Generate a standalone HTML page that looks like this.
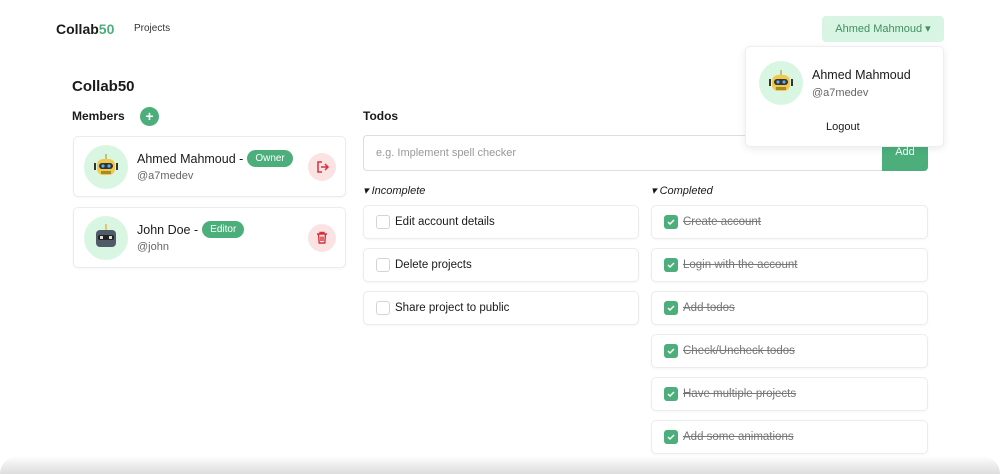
<!DOCTYPE html>
<html><head><meta charset="utf-8"><style>
*{box-sizing:border-box;margin:0;padding:0}
body{width:1000px;height:474px;overflow:hidden;background:#fff;font-family:"Liberation Sans",sans-serif;color:#1a1a1a;position:relative}
.a{position:absolute}
.card{position:absolute;border:1px solid #ececec;border-radius:5px;background:#fff;box-shadow:0 1px 2px rgba(0,0,0,.04)}
.todo{height:34px;font-size:11.5px;display:flex;align-items:center;padding-left:12px}
.cb{width:14px;height:14px;border:1px solid #d4d4d4;border-radius:3px;margin-right:5px;background:#fff}
.ck{width:14px;height:14px;border-radius:3px;margin-right:5px;background:#4caf7b;display:flex;align-items:center;justify-content:center}
.done{color:#777;text-decoration:line-through}
.badge{background:#4caf7b;color:#fff;font-size:10px;border-radius:9px;padding:3px 8px;margin-left:4px}
.av{position:absolute;width:44px;height:44px;border-radius:50%;background:#d9f6e3}
</style></head><body>
<div class="a" style="left:56px;top:21px;font-size:14px;font-weight:bold">Collab<span style="color:#4caf7b">50</span></div>
<div class="a" style="left:134px;top:23px;font-size:10px;color:#333">Projects</div>
<div class="a" style="left:822px;top:16px;width:122px;height:26px;background:#d8f5e3;border-radius:4px;color:#3f8f5f;font-size:11px;line-height:26px;text-align:center">Ahmed Mahmoud ▾</div>

<div class="a" style="left:72px;top:78px;font-size:15px;font-weight:bold">Collab50</div>
<div class="a" style="left:72px;top:109px;font-size:12px;font-weight:bold">Members</div>
<div class="a" style="left:140px;top:107px;width:19px;height:19px;border-radius:50%;background:#4caf7b;color:#fff;font-size:14px;line-height:19px;text-align:center;font-weight:bold">+</div>

<div class="card" style="left:73px;top:136px;width:273px;height:61px">
 <div class="av" style="left:10px;top:8px"><svg width="44" height="44"><rect x="13" y="14" width="18" height="16" rx="6" fill="#f2c94c"/><rect x="15" y="18" width="14" height="6" rx="3" fill="#333"/><circle cx="19" cy="21" r="1.6" fill="#5ab0f0"/><circle cx="25" cy="21" r="1.6" fill="#5ab0f0"/><rect x="17" y="26" width="10" height="3" fill="#a58a2a"/><line x1="22" y1="9" x2="22" y2="14" stroke="#a58a2a"/><rect x="10" y="18" width="2" height="7" fill="#333"/><rect x="32" y="18" width="2" height="7" fill="#333"/></svg></div>
 <div class="a" style="left:63px;top:13px;font-size:12.5px;display:flex;align-items:center">Ahmed Mahmoud -<span class="badge">Owner</span></div>
 <div class="a" style="left:63px;top:33px;font-size:11px;color:#666">@a7medev</div>
 <div class="a" style="left:234px;top:16px;width:28px;height:28px;border-radius:50%;background:#fbe3e4"><svg width="28" height="28" fill="none" stroke="#d6323b" stroke-width="1.5"><path d="M14 9h-4v10h4M13 14h7M17 11l3 3-3 3"/></svg></div>
</div>
<div class="card" style="left:73px;top:207px;width:273px;height:61px">
 <div class="av" style="left:10px;top:8px"><svg width="44" height="44"><rect x="12" y="14" width="20" height="17" rx="4" fill="#4f5b66"/><rect x="14" y="19" width="16" height="5" rx="2" fill="#222"/><rect x="16" y="20" width="3" height="3" fill="#ddd"/><rect x="25" y="20" width="3" height="3" fill="#ddd"/><line x1="22" y1="8" x2="22" y2="14" stroke="#e8b74a" stroke-width="1.5"/></svg></div>
 <div class="a" style="left:63px;top:13px;font-size:12.5px;display:flex;align-items:center">John Doe -<span class="badge">Editor</span></div>
 <div class="a" style="left:63px;top:33px;font-size:11px;color:#666">@john</div>
 <div class="a" style="left:234px;top:16px;width:28px;height:28px;border-radius:50%;background:#fbe3e4"><svg width="28" height="28" fill="none" stroke="#d6323b" stroke-width="1.4"><path d="M9 10h10M12 10V8.5h4V10M10.5 10l.7 9h5.6l.7-9M13 12.5v4.5M15 12.5v4.5"/></svg></div>
</div>

<div class="a" style="left:363px;top:109px;font-size:12px;font-weight:bold">Todos</div>
<div class="a" style="left:363px;top:135px;width:520px;height:36px;border:1px solid #ddd;border-radius:4px 0 0 4px;font-size:11px;color:#999;padding:11px 0 0 12px">e.g. Implement spell checker</div>
<div class="a" style="left:882px;top:135px;width:46px;height:36px;background:#4caf7b;border-radius:0 4px 4px 0;color:#fff;font-size:11px;text-align:center;padding-top:11px">Add</div>

<div class="a" style="left:363px;top:184px;font-size:11px;font-style:italic">▾ Incomplete</div>
<div class="a" style="left:651px;top:184px;font-size:11px;font-style:italic">▾ Completed</div>

<div class="card todo" style="left:363px;top:205px;width:276px"><div class="cb"></div>Edit account details</div>
<div class="card todo" style="left:363px;top:248px;width:276px"><div class="cb"></div>Delete projects</div>
<div class="card todo" style="left:363px;top:291px;width:276px"><div class="cb"></div>Share project to public</div>

<div class="card todo" style="left:651px;top:205px;width:277px"><div class="ck"><svg width="10" height="10"><path d="M2 5l2 2 4-4" stroke="#fff" fill="none" stroke-width="1.5"/></svg></div><span class="done">Create account</span></div>
<div class="card todo" style="left:651px;top:248px;width:277px"><div class="ck"><svg width="10" height="10"><path d="M2 5l2 2 4-4" stroke="#fff" fill="none" stroke-width="1.5"/></svg></div><span class="done">Login with the account</span></div>
<div class="card todo" style="left:651px;top:291px;width:277px"><div class="ck"><svg width="10" height="10"><path d="M2 5l2 2 4-4" stroke="#fff" fill="none" stroke-width="1.5"/></svg></div><span class="done">Add todos</span></div>
<div class="card todo" style="left:651px;top:334px;width:277px"><div class="ck"><svg width="10" height="10"><path d="M2 5l2 2 4-4" stroke="#fff" fill="none" stroke-width="1.5"/></svg></div><span class="done">Check/Uncheck todos</span></div>
<div class="card todo" style="left:651px;top:377px;width:277px"><div class="ck"><svg width="10" height="10"><path d="M2 5l2 2 4-4" stroke="#fff" fill="none" stroke-width="1.5"/></svg></div><span class="done">Have multiple projects</span></div>
<div class="card todo" style="left:651px;top:420px;width:277px"><div class="ck"><svg width="10" height="10"><path d="M2 5l2 2 4-4" stroke="#fff" fill="none" stroke-width="1.5"/></svg></div><span class="done">Add some animations</span></div>

<div class="a" style="left:745px;top:46px;width:199px;height:101px;background:#fff;border:1px solid #eee;border-radius:5px;box-shadow:0 2px 8px rgba(0,0,0,.08)">
 <div class="av" style="left:13px;top:14px"><svg width="44" height="44"><rect x="13" y="14" width="18" height="16" rx="6" fill="#f2c94c"/><rect x="15" y="18" width="14" height="6" rx="3" fill="#333"/><circle cx="19" cy="21" r="1.6" fill="#5ab0f0"/><circle cx="25" cy="21" r="1.6" fill="#5ab0f0"/><rect x="17" y="26" width="10" height="3" fill="#a58a2a"/><line x1="22" y1="9" x2="22" y2="14" stroke="#a58a2a"/><rect x="10" y="18" width="2" height="7" fill="#333"/><rect x="32" y="18" width="2" height="7" fill="#333"/></svg></div>
 <div class="a" style="left:66px;top:21px;font-size:12.5px">Ahmed Mahmoud</div>
 <div class="a" style="left:66px;top:40px;font-size:11px;color:#666">@a7medev</div>
 <div class="a" style="left:80px;top:74px;font-size:11px">Logout</div>
</div>
<div class="a" style="left:0;top:456px;width:1000px;height:18px;background:linear-gradient(#fff,#dcdcdc);border-radius:40px 40px 0 0"></div>
</body></html>
